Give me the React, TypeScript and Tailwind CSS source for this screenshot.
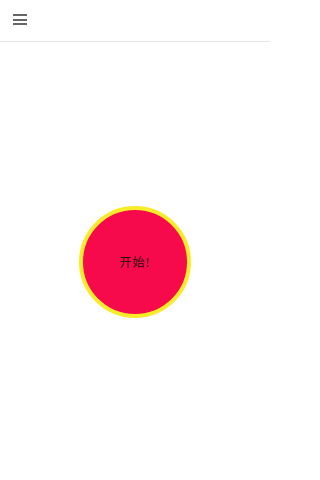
import React from "react";

export default function App() {
  return (
    <div className="flex h-[480px] w-[270px] flex-col bg-white font-['Noto_Sans','Noto_Sans_CJK_SC',sans-serif]">
      {/* Top bar */}
      <header className="flex h-[42px] shrink-0 items-start border-b border-[#e6e6e6] pl-[13px] pt-[14px]">
        <button className="flex h-[11px] w-[14px] flex-col justify-between">
          <span className="block h-[2px] w-[14px] bg-[#666]" />
          <span className="block h-[2px] w-[14px] bg-[#666]" />
          <span className="block h-[2px] w-[14px] bg-[#666]" />
        </button>
      </header>

      {/* Start button */}
      <main className="flex flex-1 items-center justify-center pt-[2px]">
        <button className="flex h-[112px] w-[112px] items-center justify-center rounded-full border-4 border-[#f7eb2a] bg-[#f70a4b] text-[12px] tracking-[1px] text-[#2a0a10] font-['Noto_Sans_CJK_SC',sans-serif]">
          开始!
        </button>
      </main>
    </div>
  );
}
